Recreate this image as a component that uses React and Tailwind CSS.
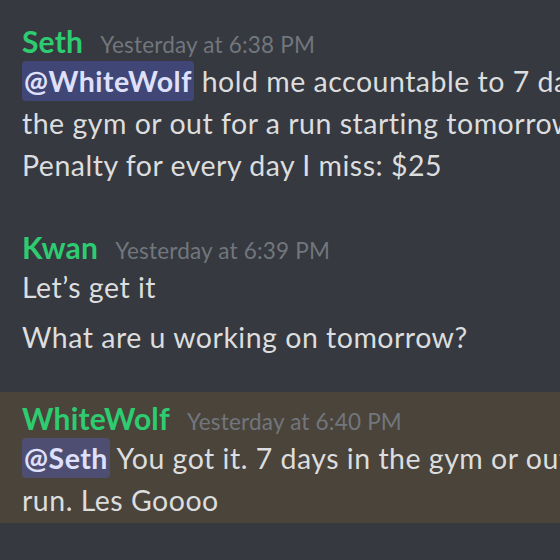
const font = { fontFamily: "Lato, 'Noto Sans', sans-serif" };

function Mention({ children, onHighlight }) {
  return (
    <span
      className={`rounded-[4px] px-[2px] py-[3px] font-bold text-[#dee0fc] ${
        onHighlight ? "bg-[#4e4e72]" : "bg-[#404675]"
      }`}
    >
      {children}
    </span>
  );
}

function Header({ name, time }) {
  return (
    <div className="flex items-baseline gap-[17px] h-[38px] leading-[38px]">
      <span className="text-[30px] font-bold tracking-[0.2px] text-[#2ecc71]">{name}</span>
      <span className="text-[22.5px] tracking-[0.2px] text-[#72767d]">{time}</span>
    </div>
  );
}

function Line({ children, className = "" }) {
  return (
    <div className={`h-[42px] leading-[42px] whitespace-nowrap ${className}`}>{children}</div>
  );
}

export default function App() {
  return (
    <div
      className="w-[560px] h-[560px] overflow-hidden bg-[#36393f] text-[28.5px] tracking-[0.5px] text-[#dcddde]"
      style={font}
    >
      <div className="px-[22px] pt-[22px]">
        <Header name="Seth" time="Yesterday at 6:38 PM" />
        <Line>
          <Mention>@WhiteWolf</Mention> hold me accountable to 7 days in
        </Line>
        <Line>the gym or out for a run starting tomorrow.</Line>
        <Line>Penalty for every day I miss: $25</Line>
      </div>

      <div className="px-[22px] pt-[42px]">
        <Header name="Kwan" time="Yesterday at 6:39 PM" />
        <Line>Let’s get it</Line>
        <Line className="mt-[8px]">What are u working on tomorrow?</Line>
      </div>

      <div className="mt-[34px] bg-[#4a443b] px-[22px] pt-[7px] pb-[2px]">
        <Header name="WhiteWolf" time="Yesterday at 6:40 PM" />
        <Line>
          <Mention onHighlight>@Seth</Mention> You got it. 7 days in the gym or out for a
        </Line>
        <Line>run. Les Goooo</Line>
      </div>
    </div>
  );
}
